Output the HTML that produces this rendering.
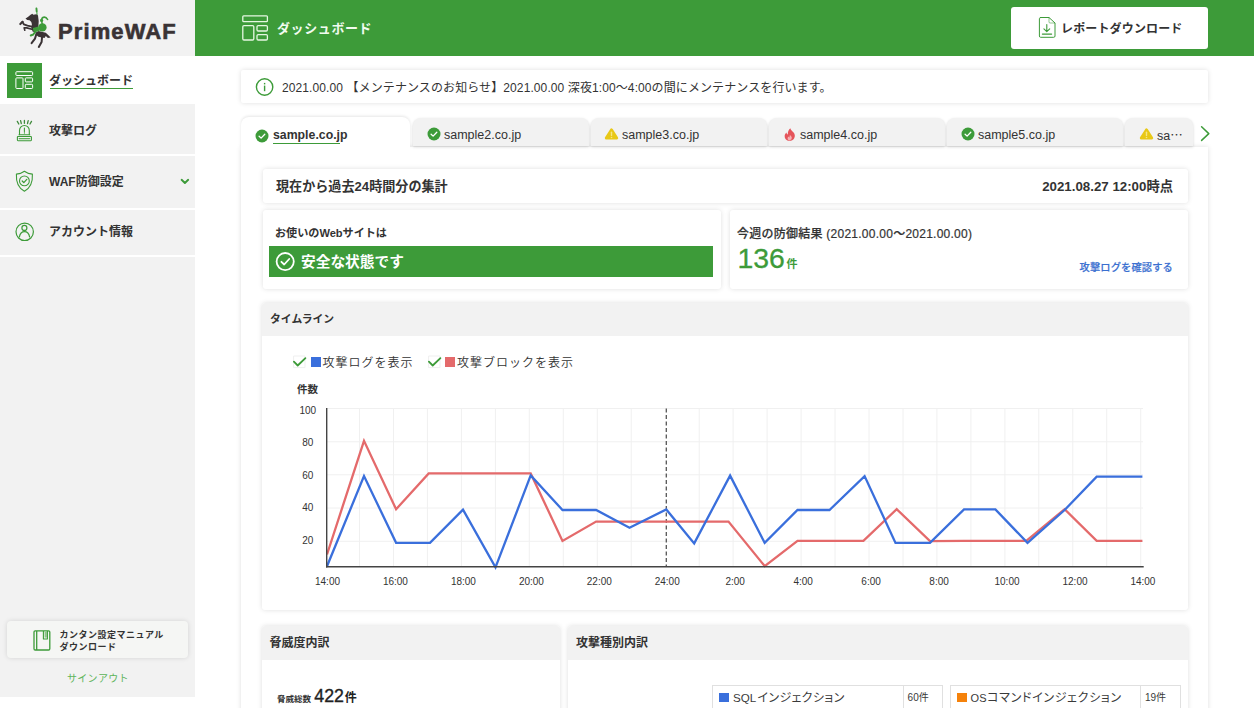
<!DOCTYPE html>
<html lang="ja">
<head>
<meta charset="utf-8">
<title>PrimeWAF ダッシュボード</title>
<style>
*{box-sizing:border-box;margin:0;padding:0}
html,body{width:1256px;height:708px;overflow:hidden;background:#fff}
body{font-family:"Liberation Sans","Noto Sans CJK JP",sans-serif;color:#333;font-size:12px;position:relative}
.abs{position:absolute}
.t{position:absolute;white-space:nowrap;line-height:1}
.b{font-weight:700}
#side{position:absolute;left:0;top:0;width:195px;height:697px;background:#f2f2f2}
#hdr{position:absolute;left:195px;top:0;width:1059px;height:55.8px;background:#3d9b39}
.sep{position:absolute;left:0;width:195px;height:2px;background:#fff}
.card{position:absolute;background:#fff;box-shadow:0 0 5px rgba(0,0,0,.13);border-radius:3px}
.ghead{position:absolute;background:#f2f2f2}
.tab{position:absolute;background:#f2f2f2;border-radius:8px 8px 0 0;box-shadow:0 1px 3px rgba(0,0,0,.17)}
.g{color:#3d9b39}
.palt{font-feature-settings:"palt"}
</style>
</head>
<body>
<!-- SIDEBAR -->
<div id="side">
  <div class="t b" style="left:58px;top:21.3px;font-size:22px;color:#3a3335;letter-spacing:1.1px;-webkit-text-stroke:.6px #3a3335">PrimeWAF</div>
  <div class="abs" style="left:0;top:56px;width:200px;height:48px;background:#fff"></div>
  <div class="abs" style="left:7px;top:62.5px;width:35px;height:35px;background:#3d9b39"></div>
  <div class="t b" style="left:49px;top:74.5px;font-size:12px">ダッシュボード</div>

  <!-- logo -->
  <svg class="abs" style="left:0;top:0" width="60" height="56" viewBox="0 0 60 56">
    <g stroke="#3d9b39" fill="none" stroke-linecap="round">
      <path d="M36.6,8.3 L37.1,15.5" stroke-width="1"/>
      <path d="M36.4,8.3 L36.6,11.3" stroke-width="1.8"/>
    </g>
    <g fill="#3a3335" stroke="#3a3335" stroke-linecap="round" stroke-linejoin="round" stroke-width="0">
      <path d="M25.5,18.6 L27.9,16.9 L30.6,14.8 L32.3,13.7 L33.3,14.8 L36.3,14.2 L38.0,15.5 L38.7,20.9 L38.4,26.4 L36.3,29.8 L35.7,32.5 L32.6,31.5 L31.3,27.7 L31.9,24.3 L31.3,22.0 L29.6,20.3 L27.2,19.9 Z"/>
      <path d="M35.7,32.5 L38.4,31.1 L45.8,32.8 L47.9,34.8 L50.7,37.6 L47.9,37.9 L45.8,35.9 L44.5,37.9 L41.8,37.4 L38.4,36.7 L35.7,34.6 Z"/>
      <path d="M31.9,26.7 L27.5,25.6 L23.8,24.3 L22.4,21.8" fill="none" stroke-width="1.8"/>
      <path d="M22.6,21.8 L20.3,24.1" fill="none" stroke-width="2.1"/>
      <path d="M31.9,29.2 L26.8,27.9 L24.1,27.9 L24.8,30.3" fill="none" stroke-width="1.6"/>
      <path d="M36.3,34.2 L35.0,38.6 L31.6,43.1" fill="none" stroke-width="2"/>
      <path d="M42.1,36.5 L41.6,42.0 L38.8,46.9" fill="none" stroke-width="2"/>
    </g>
    <g fill="#3d9b39" stroke="#3d9b39" stroke-linecap="round" stroke-linejoin="round" stroke-width="0">
      <circle cx="42.4" cy="27.4" r="4.2"/>
      <path d="M32.9,28.1 L38.4,26.4 L39.7,31.1 L36.3,31.8 L33.3,31.1 Z"/>
      <path d="M35.7,31.1 L33.3,34.5 L30.7,35.5" fill="none" stroke-width="1.9"/>
      <circle cx="41.6" cy="20.4" r="1.6"/>
      <path d="M41.8,21.8 L42.2,23.8" fill="none" stroke-width="1.5"/>
      <path d="M41.6,19.3 C42.1,16.7 45.8,16.1 47.6,19.5" fill="none" stroke-width="1.6"/>
    </g>
  </svg>
  <!-- dashboard icon (side) -->
  <svg class="abs" style="left:7px;top:62px" width="36" height="36" viewBox="7 62 36 36" fill="none" stroke="#fff" stroke-width="1">
    <rect x="15.9" y="71.7" width="16.7" height="3.8" rx=".8"/>
    <rect x="15.9" y="77.9" width="7.1" height="10.6" rx=".8"/>
    <rect x="25.3" y="77.9" width="7.3" height="4" rx=".8"/>
    <rect x="25.3" y="84.3" width="7.3" height="4.2" rx=".8"/>
  </svg>
  <!-- siren -->
  <svg class="abs" style="left:10px;top:115px" width="30" height="30" viewBox="10 115 30 30" fill="none" stroke="#3d9b39" stroke-width="1.1" stroke-linecap="round">
    <path d="M19.5,134.6 V130.4 A4.9,4.9 0 0 1 29.3,130.4 V134.6"/>
    <path d="M19,134.7 H29.8"/>
    <path d="M24.4,128 V131.6 M24.4,132.8 V133.1"/>
    <rect x="17.4" y="136.5" width="14" height="4.2" rx=".6"/>
    <path d="M19.2,138.6 H29.6" stroke-width="1.3" opacity=".8"/>
    <path d="M17.3,121.4 L18.8,124 M20.6,120.7 L21.3,123.5 M24.4,120.5 V123.3 M28.2,120.7 L27.5,123.5 M31.5,121.4 L30,124" stroke-width="1.3" stroke="#3f8a3c"/>
  </svg>
  <!-- shield -->
  <svg class="abs" style="left:10px;top:165px" width="30" height="32" viewBox="10 165 30 32" fill="none" stroke="#3d9b39" stroke-width="1.1" stroke-linejoin="round" stroke-linecap="round">
    <path d="M24.4,171.2 C22,173 19,173.9 16.4,174.1 C16,181 17.5,187.5 24.4,191.3 C31.3,187.5 32.8,181 32.4,174.1 C29.8,173.9 26.8,173 24.4,171.2 Z"/>
    <circle cx="24.4" cy="180.9" r="4.9"/>
    <path d="M22.2,181 L23.8,182.6 L26.8,179.4" stroke-width="1.3"/>
  </svg>
  <!-- chevron -->
  <svg class="abs" style="left:178px;top:176px" width="14" height="10" viewBox="178 176 14 10" fill="none" stroke="#3d9b39" stroke-width="1.9" stroke-linecap="round" stroke-linejoin="round"><path d="M181.6,179.8 L184.9,183 L188.2,179.8"/></svg>
  <!-- account -->
  <svg class="abs" style="left:10px;top:217px" width="30" height="30" viewBox="10 217 30 30" fill="none" stroke="#3d9b39" stroke-width="1.2" stroke-linecap="round">
    <circle cx="24.7" cy="231.8" r="8.7"/>
    <circle cx="24.4" cy="227.9" r="2.5"/>
    <path d="M19.4,236.8 C20,233.3 22,231.6 24.5,231.6 C27,231.6 29,233.3 29.6,236.8"/>
  </svg>
  <div class="abs" style="left:49.5px;top:88px;width:83px;height:1px;background:#3d9b39"></div>
  <div class="t b" style="left:49px;top:125px;font-size:12px">攻撃ログ</div>
  <div class="sep" style="top:153.5px"></div>
  <div class="t b" style="left:49px;top:175.7px;font-size:12px">WAF防御設定</div>
  <div class="sep" style="top:207.5px"></div>
  <div class="t b" style="left:49px;top:226px;font-size:12px">アカウント情報</div>
  <div class="sep" style="top:254.5px"></div>
  <div class="card" style="left:7px;top:621px;width:181px;height:37px;background:#f5f6f4;border-radius:4px"></div>

  <svg class="abs" style="left:30px;top:626px" width="24" height="28" viewBox="30 626 24 28" fill="none" stroke="#3d9b39" stroke-width="1.3" stroke-linejoin="round">
    <rect x="34" y="630.8" width="15.8" height="19.2" rx="1.2"/>
    <path d="M36.7,631 V650"/>
    <path d="M43.4,631 V639 H47.4 V631" stroke-width="1.1"/>
    <rect x="44.6" y="632" width="2.2" height="5.6" fill="#3d9b39" stroke="none" opacity=".55"/>
  </svg>
  <div class="t b" style="left:59.6px;top:628.7px;font-size:9px;line-height:12px;white-space:normal;width:130px;letter-spacing:.5px">カンタン設定マニュアル<br>ダウンロード</div>
  <div class="t" style="left:67px;top:674px;font-size:10px;color:#5db45a;letter-spacing:.3px">サインアウト</div>
</div>
<!-- HEADER -->
<div id="hdr">

  <svg class="abs" style="left:45px;top:12px" width="32" height="32" viewBox="240 12 32 32" fill="none" stroke="#e6f7e2" stroke-width="1.3">
    <rect x="242.8" y="15.8" width="24.6" height="5.8" rx=".9"/>
    <rect x="242.8" y="25.6" width="11" height="14.4" rx="1.2"/>
    <rect x="257" y="25.6" width="10.4" height="5.4" rx="1.2"/>
    <rect x="257" y="34.6" width="10.4" height="5.4" rx="1.2"/>
  </svg>
  <div class="t b" style="left:82px;top:21.6px;font-size:13px;color:#f1fbef;letter-spacing:.6px">ダッシュボード</div>
  <div class="abs" style="left:816px;top:7px;width:197px;height:41.6px;background:#fff;border-radius:3px"></div>

  <svg class="abs" style="left:840px;top:14px" width="24" height="28" viewBox="1035 14 24 28" fill="none" stroke="#3d9b39" stroke-width="1" stroke-linejoin="round" stroke-linecap="round">
    <path d="M1040.6,17.5 H1049 L1055,23 V36 Q1055,37.3 1053.7,37.3 H1040.6 Q1039.4,37.3 1039.4,36 V18.7 Q1039.4,17.5 1040.6,17.5 Z"/>
    <path d="M1049,17.8 V22 Q1049,23 1050,23 H1054.8" stroke-width=".8" opacity=".7"/>
    <path d="M1046.8,24.6 V31.4 M1043.9,28.8 L1046.8,31.6 L1049.7,28.8" stroke-width="1.1"/>
    <path d="M1042.4,34.1 H1051.6" stroke-width="1.2"/>
  </svg>
  <div class="t b" style="left:866px;top:23px;font-size:12px;color:#333;letter-spacing:.15px">レポートダウンロード</div>
</div>
<!-- MAIN -->
<div id="main">
  <!-- notice -->
  <div class="card" style="left:241px;top:70px;width:967px;height:33px;border-radius:2px"></div>
  <svg class="abs" style="left:255px;top:78px" width="19" height="19" viewBox="0 0 19 19"><circle cx="9.6" cy="9" r="8.2" fill="none" stroke="#3d9b39" stroke-width="1.4"/><rect x="8.9" y="7.6" width="1.4" height="5.6" fill="#3d9b39"/><rect x="8.9" y="4.9" width="1.4" height="1.5" fill="#3d9b39"/></svg>
  <div class="t" style="left:282px;top:81.5px;font-size:12px;letter-spacing:.1px">2021.00.00 【メンテナンスのお知らせ】2021.00.00 深夜1:00〜4:00の間にメンテナンスを行います。</div>
  <!-- panel -->
  <div class="card" style="left:241px;top:146.5px;width:967px;height:600px;border-radius:0"></div>
  <!-- tabs -->
  <div class="tab" style="left:413px;width:176px;top:117.8px;height:28px"></div>
  <div class="tab" style="left:591px;width:176px;top:117.8px;height:28px"></div>
  <div class="tab" style="left:769px;width:176px;top:117.8px;height:28px"></div>
  <div class="tab" style="left:947px;width:176px;top:117.8px;height:28px"></div>
  <div class="tab" style="left:1125px;width:67.8px;top:117.8px;height:28px"></div>
  <div class="tab" style="left:241px;width:169px;top:117px;height:31px;background:#fff;box-shadow:0 -1px 3px rgba(0,0,0,.10)"></div>
  <div class="abs" style="left:241px;top:146.5px;width:169px;height:7px;background:#fff"></div>
  <svg class="abs" style="left:255.2px;top:129px" width="14" height="14" viewBox="0 0 14 14"><circle cx="7" cy="7" r="6.5" fill="#3d9b39"/><path d="M4.1,7.2 L6.1,9.1 L9.8,5.2" fill="none" stroke="#fff" stroke-width="1.3" stroke-linecap="round" stroke-linejoin="round"/></svg>
  <svg class="abs" style="left:427px;top:127.19999999999999px" width="14" height="14" viewBox="0 0 14 14"><circle cx="7" cy="7" r="6.5" fill="#3d9b39"/><path d="M4.1,7.2 L6.1,9.1 L9.8,5.2" fill="none" stroke="#fff" stroke-width="1.3" stroke-linecap="round" stroke-linejoin="round"/></svg>
  <svg class="abs" style="left:604px;top:127.3px" width="15" height="13" viewBox="0 0 15 13"><path d="M7.5,3 L12.6,11 H2.4 Z" fill="#e8c816" stroke="#e8c816" stroke-width="3.2" stroke-linejoin="round"/><path d="M7.5,5.2 V8.4" stroke="#f7e683" stroke-width="1.4" stroke-linecap="round"/><circle cx="7.5" cy="10.5" r=".8" fill="#f7e683"/></svg>
  <svg class="abs" style="left:783.6px;top:127.6px" width="12" height="13" viewBox="0 0 12 13"><path d="M6.3,.2 C6.8,2.2 8.2,3 9.6,4.6 C11,6.2 11.2,8.4 10.2,10.2 C9.2,12 7.4,12.8 5.6,12.8 C3.4,12.8 1.4,11.6 .8,9.4 C.3,7.4 1.2,5.6 2.4,4.6 C2.6,5.6 3,6.2 3.8,6.6 C3.6,4.2 4.6,1.6 6.3,.2 Z" fill="#e5545b"/><path d="M6,7 C7.4,8.2 8.2,9.4 7.6,10.8 C7.2,11.8 6.4,12.2 5.6,12.2 C4.4,12.2 3.6,11.4 3.6,10.4 C3.6,9.4 4.2,8.8 4.6,8.4 C4.8,9 5.2,9.4 5.6,9.4 C5.4,8.6 5.6,7.6 6,7 Z" fill="#f6b1b4"/></svg>
  <svg class="abs" style="left:960.5px;top:127.19999999999999px" width="14" height="14" viewBox="0 0 14 14"><circle cx="7" cy="7" r="6.5" fill="#3d9b39"/><path d="M4.1,7.2 L6.1,9.1 L9.8,5.2" fill="none" stroke="#fff" stroke-width="1.3" stroke-linecap="round" stroke-linejoin="round"/></svg>
  <svg class="abs" style="left:1138.6px;top:127.3px" width="15" height="13" viewBox="0 0 15 13"><path d="M7.5,3 L12.6,11 H2.4 Z" fill="#e8c816" stroke="#e8c816" stroke-width="3.2" stroke-linejoin="round"/><path d="M7.5,5.2 V8.4" stroke="#f7e683" stroke-width="1.4" stroke-linecap="round"/><circle cx="7.5" cy="10.5" r=".8" fill="#f7e683"/></svg>
  <svg class="abs" style="left:1198px;top:124px" width="14" height="20" viewBox="1198 124 14 20" fill="none" stroke="#3d9b39" stroke-width="1.5" stroke-linecap="round" stroke-linejoin="round"><path d="M1201.6,126.8 L1208.8,133.6 L1201.6,140.4"/></svg>
  <div class="t b" style="left:273px;top:128.6px;font-size:12.3px">sample.co.jp</div>
  <div class="abs" style="left:273px;top:143px;width:67px;height:1px;background:#3d9b39"></div>
  <div class="t" style="left:444px;top:128.8px;font-size:12.5px">sample2.co.jp</div>
  <div class="t" style="left:622px;top:128.8px;font-size:12.5px">sample3.co.jp</div>
  <div class="t" style="left:800px;top:128.8px;font-size:12.5px">sample4.co.jp</div>
  <div class="t" style="left:978px;top:128.8px;font-size:12.5px">sample5.co.jp</div>
  <div class="t" style="left:1157px;top:128.8px;font-size:12.5px">sa<span style="font-family:'Noto Sans CJK JP',sans-serif">…</span></div>
  <!-- summary bar -->
  <div class="card" style="left:262.5px;top:168.7px;width:925px;height:34px"></div>
  <div class="t b" style="left:276px;top:180.2px;font-size:13.1px">現在から過去24時間分の集計</div>
  <div class="t b" style="right:83px;top:180px;font-size:13.3px">2021.08.27 12:00時点</div>
  <!-- card1 -->
  <div class="card" style="left:262.5px;top:209.7px;width:458px;height:79px"></div>
  <div class="t b" style="left:275px;top:228px;font-size:11.1px">お使いのWebサイトは</div>
  <div class="abs" style="left:269px;top:245.5px;width:444px;height:31px;background:#3d9b39"></div>
  <svg class="abs" style="left:275px;top:251px" width="21" height="21" viewBox="0 0 21 21" fill="none" stroke="#fff" stroke-width="1.8" stroke-linecap="round" stroke-linejoin="round"><circle cx="10.2" cy="10.6" r="8.6"/><path d="M6.4,10.8 L9.2,13.5 L14.2,8"/></svg>
  <div class="t b" style="left:301px;top:254.8px;font-size:14.7px;color:#fff">安全な状態です</div>
  <!-- card2 -->
  <div class="card" style="left:729.5px;top:209.7px;width:458px;height:79px"></div>
  <div class="t" style="left:737px;top:227.8px;font-size:12px;font-weight:500;letter-spacing:.25px;-webkit-text-stroke:.2px #333">今週の防御結果 (2021.00.00〜2021.00.00)</div>
  <div class="t g" style="left:737.5px;top:244.2px;font-size:28.4px;-webkit-text-stroke:.3px #3d9b39">136<span class="b" style="font-size:11px;margin-left:1.5px;-webkit-text-stroke:0">件</span></div>
  <div class="t" style="right:83px;top:263px;font-size:10.2px;color:#3a6fd0;font-weight:500;letter-spacing:.2px;-webkit-text-stroke:.2px #3a6fd0">攻撃ログを確認する</div>
  <!-- timeline -->
  <div class="card" style="left:261.5px;top:303px;width:926.5px;height:307px"></div>
  <div class="ghead" style="left:261.5px;top:303px;width:926.5px;height:32.7px;border-radius:3px 3px 0 0"></div>
  <div class="t b" style="left:270px;top:313.6px;font-size:10.8px">タイムライン</div>
  <svg class="abs" style="left:291.5px;top:355px" width="16" height="14" viewBox="0 0 16 14" fill="none" stroke="#3d9b39" stroke-width="1.8" stroke-linecap="round" stroke-linejoin="round"><rect x="2" y="1" width="11" height="11.6" stroke="#efefef" stroke-width="1"/><path d="M1.9,6.6 L5.7,10.5 L13.4,3.1"/></svg>
  <div class="abs" style="left:310.9px;top:357px;width:9.8px;height:9.8px;background:#3a6fdc"></div>
  <div class="t" style="left:322.5px;top:357px;font-size:12px;letter-spacing:1px;font-weight:350">攻撃ログを表示</div>
  <svg class="abs" style="left:426.5px;top:355px" width="16" height="14" viewBox="0 0 16 14" fill="none" stroke="#3d9b39" stroke-width="1.8" stroke-linecap="round" stroke-linejoin="round"><rect x="2" y="1" width="11" height="11.6" stroke="#efefef" stroke-width="1"/><path d="M1.9,6.6 L5.7,10.5 L13.4,3.1"/></svg>
  <div class="abs" style="left:445.3px;top:357px;width:9.8px;height:9.8px;background:#e46a6b"></div>
  <div class="t" style="left:457px;top:357px;font-size:12px;letter-spacing:1px;font-weight:350">攻撃ブロックを表示</div>
  <div class="t b" style="left:297px;top:384px;font-size:10.5px">件数</div>
  <svg class="abs" style="left:261px;top:336px" width="927" height="274" viewBox="0 0 927 274">
<g stroke="#f0f0f0" stroke-width="1" fill="none"><line x1="98.5" y1="72.2" x2="98.5" y2="230.5"/><line x1="132.5" y1="72.2" x2="132.5" y2="230.5"/><line x1="166.4" y1="72.2" x2="166.4" y2="230.5"/><line x1="200.4" y1="72.2" x2="200.4" y2="230.5"/><line x1="234.4" y1="72.2" x2="234.4" y2="230.5"/><line x1="268.3" y1="72.2" x2="268.3" y2="230.5"/><line x1="302.3" y1="72.2" x2="302.3" y2="230.5"/><line x1="336.3" y1="72.2" x2="336.3" y2="230.5"/><line x1="370.2" y1="72.2" x2="370.2" y2="230.5"/><line x1="438.2" y1="72.2" x2="438.2" y2="230.5"/><line x1="472.1" y1="72.2" x2="472.1" y2="230.5"/><line x1="506.1" y1="72.2" x2="506.1" y2="230.5"/><line x1="540.1" y1="72.2" x2="540.1" y2="230.5"/><line x1="574.0" y1="72.2" x2="574.0" y2="230.5"/><line x1="608.0" y1="72.2" x2="608.0" y2="230.5"/><line x1="642.0" y1="72.2" x2="642.0" y2="230.5"/><line x1="675.9" y1="72.2" x2="675.9" y2="230.5"/><line x1="709.9" y1="72.2" x2="709.9" y2="230.5"/><line x1="743.9" y1="72.2" x2="743.9" y2="230.5"/><line x1="777.8" y1="72.2" x2="777.8" y2="230.5"/><line x1="811.8" y1="72.2" x2="811.8" y2="230.5"/><line x1="845.7" y1="72.2" x2="845.7" y2="230.5"/><line x1="879.7" y1="72.2" x2="879.7" y2="230.5"/><line x1="66" y1="72.5" x2="882" y2="72.5"/><line x1="66" y1="105.8" x2="882" y2="105.8"/><line x1="66" y1="138.8" x2="882" y2="138.8"/><line x1="66" y1="172.0" x2="882" y2="172.0"/><line x1="66" y1="205.3" x2="882" y2="205.3"/></g>
<line x1="405.3" y1="72.5" x2="405.3" y2="230.5" stroke="#555" stroke-width="1.3" stroke-dasharray="4 2.5"/>
<polyline points="66.0,218.5 103.0,104.8 135.1,173.2 167.7,137.4 202.0,137.4 234.5,137.4 269.7,137.4 301.5,204.9 335.1,185.6 368.5,185.6 405.3,185.6 433.2,185.6 467.5,185.6 503.7,230.1 536.5,204.9 568.5,204.9 602.4,204.9 635.7,173.2 669.0,205.2 703.0,204.9 734.4,204.9 765.3,204.9 803.6,173.2 835.7,204.9 881.4,204.9" fill="none" stroke="#e46a6b" stroke-width="2.3" stroke-linejoin="miter"/>
<polyline points="66.0,230.2 103.0,140.1 135.1,206.8 169.0,206.8 202.0,173.6 234.5,231.4 269.7,139.4 301.5,174.0 335.1,174.0 368.5,191.8 405.3,173.4 433.2,207.4 469.1,139.6 503.7,206.9 536.5,174.0 568.5,174.0 603.6,140.1 634.5,206.9 669.0,206.9 703.0,173.4 734.4,173.4 766.5,206.9 803.6,174.0 835.7,140.6 881.4,140.6" fill="none" stroke="#3a6fdc" stroke-width="2.3" stroke-linejoin="miter"/>
<line x1="65.7" y1="72" x2="65.7" y2="231.4" stroke="#444" stroke-width="1.4"/>
<line x1="65" y1="230.8" x2="882.7" y2="230.8" stroke="#444" stroke-width="1.4"/>
<g font-size="10" fill="#333" text-anchor="middle">
<text x="46.8" y="77.6">100</text><text x="46.8" y="110.0">80</text><text x="46.8" y="142.6">60</text><text x="46.8" y="175.1">40</text><text x="46.8" y="207.6">20</text></g>
<g font-size="10" fill="#333" text-anchor="middle"><text x="66.5" y="249">14:00</text><text x="134.4" y="249">16:00</text><text x="202.4" y="249">18:00</text><text x="270.4" y="249">20:00</text><text x="338.3" y="249">22:00</text><text x="406.2" y="249">24:00</text><text x="474.2" y="249">2:00</text><text x="542.2" y="249">4:00</text><text x="610.1" y="249">6:00</text><text x="678.1" y="249">8:00</text><text x="746.0" y="249">10:00</text><text x="814.0" y="249">12:00</text><text x="881.9" y="249">14:00</text></g>
</svg>
  <!-- bottom cards -->
  <div class="card" style="left:261.5px;top:626px;width:298px;height:120px"></div>
  <div class="ghead" style="left:261.5px;top:626px;width:298px;height:33.5px;border-radius:3px 3px 0 0"></div>
  <div class="t b" style="left:269.5px;top:637px;font-size:12px">脅威度内訳</div>
  <div class="t b" style="left:277px;top:694.5px;font-size:8.5px">脅威総数</div>
  <div class="t" style="left:314.3px;top:688px;font-size:17.8px;font-weight:500;color:#222;-webkit-text-stroke:.35px #222">422<span class="b" style="font-size:12px;-webkit-text-stroke:0;margin-left:.8px">件</span></div>
  <div class="card" style="left:568px;top:626px;width:620px;height:120px"></div>
  <div class="ghead" style="left:568px;top:626px;width:620px;height:33.5px;border-radius:3px 3px 0 0"></div>
  <div class="t b" style="left:576px;top:637px;font-size:12px">攻撃種別内訳</div>
  <div class="abs" style="left:712px;top:684.5px;width:231px;height:40px;border:1px solid #e0e0e0"></div>
  <div class="abs" style="left:902.5px;top:684.5px;width:1px;height:40px;background:#e0e0e0"></div>
  <div class="abs" style="left:719px;top:692.5px;width:10px;height:9.5px;background:#3a6fdc"></div>
  <div class="t palt" style="left:733px;top:691.5px;font-size:12px;color:#3a3a3a"><span style="font-size:11.6px">SQL</span><span style="letter-spacing:.38px;margin-left:1.2px">インジェクション</span></div>
  <div class="t" style="left:907.6px;top:692.6px;font-size:10px;color:#3a3a3a">60件</div>
  <div class="abs" style="left:949.5px;top:684.5px;width:231px;height:40px;border:1px solid #e0e0e0"></div>
  <div class="abs" style="left:1140px;top:684.5px;width:1px;height:40px;background:#e0e0e0"></div>
  <div class="abs" style="left:956.5px;top:692.5px;width:10.5px;height:9.5px;background:#f5820b"></div>
  <div class="t palt" style="left:970.6px;top:691.5px;font-size:12px;color:#3a3a3a"><span style="font-size:11px">OS</span><span style="letter-spacing:.68px;margin-left:.6px">コマンドインジェクション</span></div>
  <div class="t" style="left:1145px;top:692.6px;font-size:10px;color:#3a3a3a">19件</div>
</div>
</body>
</html>
